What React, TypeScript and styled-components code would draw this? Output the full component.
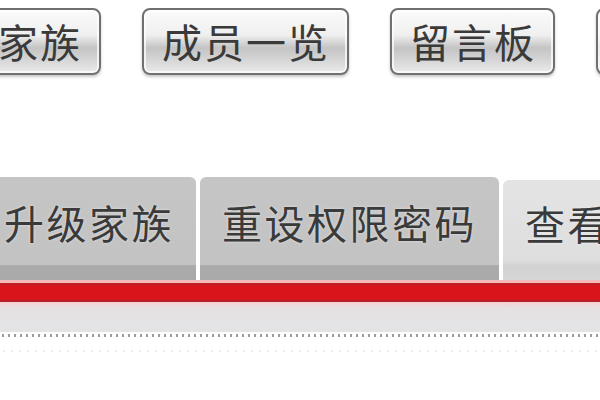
import React from 'react';
import styled, { createGlobalStyle } from 'styled-components';

const GlobalStyle = createGlobalStyle`
	html, body {
		margin: 0;
		padding: 0;
		background: #ffffff;
	}
	body {
		width: 600px;
		height: 400px;
		overflow: hidden;
		font-family: 'Noto Sans CJK SC', 'Noto Sans', sans-serif;
	}
`;

const Page = styled.div`
	display: flex;
	flex-direction: column;
	width: 600px;
	height: 400px;
	overflow: hidden;
`;

const TopNav = styled.nav`
	display: flex;
	gap: 41px;
	margin: 8px 0 0 -22px;
	white-space: nowrap;
`;

const NavButton = styled.a`
	display: flex;
	align-items: center;
	flex-shrink: 0;
	box-sizing: border-box;
	height: 67px;
	padding: 0 17px 2px 18px;
	border: 2px solid #707070;
	border-radius: 8px;
	background: linear-gradient(
		#fbfbfb 0%,
		#efefef 40%,
		#c4c4c4 60%,
		#d2d2d2 76%,
		#ebebeb 100%
	);
	box-shadow: 0 2px 3px rgba(0, 0, 0, 0.22), inset 0 0 0 2px rgba(255, 255, 255, 0.7);
	color: #3a3a3a;
	font-size: 40px;
	letter-spacing: 2px;
	line-height: 1;
	text-decoration: none;
`;

const TabRow = styled.div`
	display: flex;
	align-items: flex-end;
	gap: 4px;
	height: 103px;
	margin: 102px 0 0 -18px;
	white-space: nowrap;
`;

const Tab = styled.a<{ $active?: boolean }>`
	display: flex;
	align-items: center;
	flex-shrink: 0;
	box-sizing: border-box;
	height: ${({ $active }) => ($active ? '100px' : '103px')};
	padding: 0 ${({ $active }) => ($active ? '20px' : '22px')} 14px 22px;
	border-radius: 6px 6px 0 0;
	background: ${({ $active }) =>
		$active
			? 'linear-gradient(#e4e4e4 0%, #dedede 80%, #d2d2d2 86%, #d6d6d6 100%)'
			: 'linear-gradient(#c5c5c5 0%, #c3c3c3 85%, #ababab 86%, #a9a9a9 100%)'};
	color: #3a3a3a;
	font-size: 40px;
	letter-spacing: 2.5px;
	line-height: 1;
	text-decoration: none;
	text-shadow: 0 0 3px rgba(255, 255, 255, 0.55);
`;

const RedBar = styled.div`
	height: 19px;
	border-top: 3px solid #f6b9b9;
	background: linear-gradient(#b52228 0%, #d8151b 18%, #da141a 80%, #a8262a 100%);
	flex-shrink: 0;
`;

const GreyBand = styled.div`
	height: 30px;
	background: linear-gradient(#fbd0d0 0%, #e6e2e4 20%, #e3e3e5 100%);
	flex-shrink: 0;
`;

const DottedRule = styled.div`
	height: 3px;
	margin-top: 2px;
	background-image: radial-gradient(circle, #9c9c9c 0 1.2px, transparent 1.4px);
	background-size: 6px 3px;
	flex-shrink: 0;
`;

const FaintRule = styled.div`
	height: 2px;
	margin-top: 13px;
	background-image: radial-gradient(circle, #ececec 0 1px, transparent 1.2px);
	background-size: 8px 2px;
	flex-shrink: 0;
`;

const navItems = ['家族', '成员一览', '留言板', '家族'];
const tabs = ['升级家族', '重设权限密码', '查看成员'];

export default function App() {
	return (
		<>
			<GlobalStyle />
			<Page>
				<TopNav>
					{navItems.map((item, i) => (
						<NavButton key={i}>{item}</NavButton>
					))}
				</TopNav>
				<TabRow>
					{tabs.map((tab, i) => (
						<Tab key={tab} $active={i === 2}>
							{tab}
						</Tab>
					))}
				</TabRow>
				<RedBar />
				<GreyBand />
				<DottedRule />
				<FaintRule />
			</Page>
		</>
	);
}
